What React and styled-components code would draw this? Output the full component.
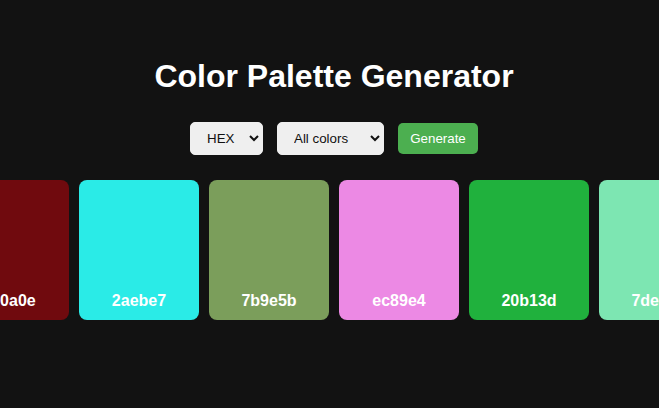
import React, { useState } from "react";
import styled, { createGlobalStyle } from "styled-components";

const GlobalStyle = createGlobalStyle`
  html, body {
    margin: 0;
    background: #121212;
    overflow: hidden;
  }
  body {
    font-family: "Liberation Sans", Arial, sans-serif;
  }
`;

const palette = ["700a0e", "2aebe7", "7b9e5b", "ec89e4", "20b13d", "7de6b2"];

const App = () => {
  const [format, setFormat] = useState("hex");
  const [mode, setMode] = useState("all");

  return (
    <Page>
      <GlobalStyle />
      <Title>Color Palette Generator</Title>
      <Controls>
        <Select width={73} value={format} onChange={(e) => setFormat(e.target.value)}>
          <option value="hex">HEX</option>
          <option value="rgb">RGB</option>
          <option value="hsl">HSL</option>
        </Select>
        <Select width={107} value={mode} onChange={(e) => setMode(e.target.value)}>
          <option value="all">All colors</option>
          <option value="warm">Warm</option>
          <option value="cool">Cool</option>
        </Select>
        <GenerateButton>Generate</GenerateButton>
      </Controls>
      <Cards>
        {palette.map((hex) => (
          <Card key={hex} color={"#" + hex}>
            <Label>{hex}</Label>
          </Card>
        ))}
      </Cards>
    </Page>
  );
};

export default App;

const Page = styled.div`
  padding: 58px 0 0 9px;
  text-align: center;
  color: #fff;
`;

const Title = styled.h1`
  margin: 0 0 27px;
  font-size: 32px;
  font-weight: 700;
  line-height: 37px;
  color: #fff;
`;

const Controls = styled.div`
  display: flex;
  justify-content: center;
  align-items: center;
  gap: 14px;
  height: 33px;
  margin-bottom: 25px;
`;

const Select = styled.select`
  width: ${(p) => p.width}px;
  height: 33px;
  padding: 0 8px 0 12px;
  font-family: "Liberation Sans", Arial, sans-serif;
  font-size: 13.333px;
  color: #111;
  background-color: #efefef;
  border: 1px solid #efefef;
  border-radius: 5px;
`;

const GenerateButton = styled.button`
  width: 80px;
  height: 31px;
  padding: 0 12px;
  font-family: "Liberation Sans", Arial, sans-serif;
  font-size: 13.333px;
  color: #fff;
  background: #4caf50;
  border: none;
  border-radius: 5px;
  cursor: pointer;
`;

const Cards = styled.div`
  display: flex;
  justify-content: center;
  gap: 10px;
`;

const Card = styled.div`
  flex: 0 0 120px;
  height: 140px;
  border-radius: 8px;
  background: ${(p) => p.color};
  display: flex;
  align-items: flex-end;
  justify-content: center;
  padding-bottom: 10px;
  box-sizing: border-box;
`;

const Label = styled.span`
  font-size: 16px;
  font-weight: 700;
  color: #fff;
`;
